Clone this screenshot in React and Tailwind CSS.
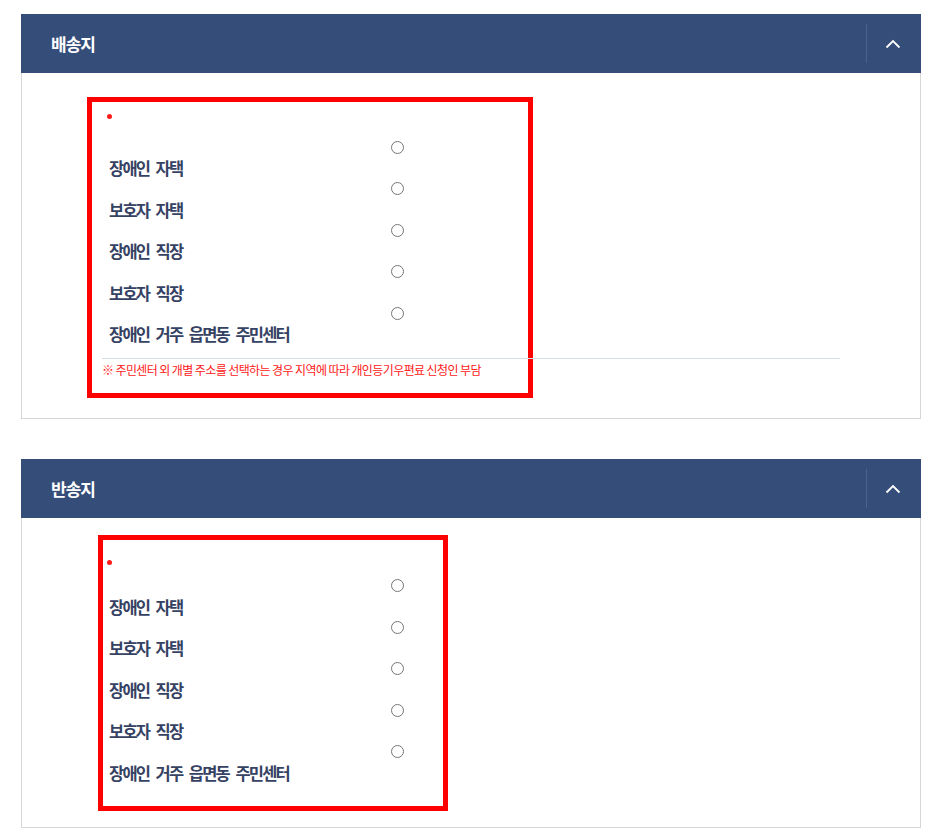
import React from "react";

const items = ["장애인 자택", "보호자 자택", "장애인 직장", "보호자 직장", "장애인 거주 읍면동 주민센터"];

function Chevron() {
  return (
    <svg width="16" height="10" viewBox="0 0 16 10" fill="none">
      <polyline points="1.5,8.5 8,2 14.5,8.5" stroke="#ffffff" strokeWidth="1.8" fill="none" />
    </svg>
  );
}

function Header({ title }) {
  return (
    <div className="h-[59px] bg-[#344d79] flex items-center justify-between">
      <div className="pl-[30px] text-white text-[17px] font-bold tracking-[-1px] leading-none">
        {title}
      </div>
      <div className="w-[55px] h-[39px] border-l border-[#4b6290] flex items-center justify-center pr-[3px]">
        <Chevron />
      </div>
    </div>
  );
}

function Options({ name, radioMl, labelMl }) {
  return (
    <div>
      {items.map((t) => (
        <div key={t} className="h-[41.5px]">
          <input type="radio" name={name} className={"block m-0 w-[13px] h-[13px] " + radioMl} />
          <div
            className={"mt-[2.5px] h-[26px] leading-[24px] text-[16.5px] font-bold text-[#364263] tracking-[-1.8px] [word-spacing:4.5px] whitespace-nowrap " + labelMl}
          >
            {t}
          </div>
        </div>
      ))}
    </div>
  );
}

export default function App() {
  return (
    <div
      className="w-[935px] min-h-[840px] bg-white pt-[14px] pl-[21px]"
      style={{ fontFamily: '"Noto Sans CJK KR", "Noto Sans", sans-serif' }}
    >
      <div className="w-[900px]">
        <Header title="배송지" />
        <div className="border-x border-b border-[#d6d6d6] pt-[24px] pb-[20px] pl-[65px]">
          <div className="w-[446px] border-[5px] border-[#ff0000] pb-[14px]">
            <div className="mt-[12px] ml-[15px] w-[5px] h-[5px] rounded-full bg-[#ff1a1a]" />
            <div className="mt-[21.5px]">
              <Options name="ship" radioMl="ml-[298.5px]" labelMl="ml-[17px]" />
            </div>
            <div className="mt-[10px] ml-[10px] w-[738px] h-px bg-[#d5dde9]" />
            <div className="mt-[2px] ml-[10px] text-[12px] leading-[18px] text-[#ff2020] tracking-[-0.6px] whitespace-nowrap">
              ※ 주민센터 외 개별 주소를 선택하는 경우 지역에 따라 개인등기우편료 신청인 부담
            </div>
          </div>
        </div>
      </div>

      <div className="w-[900px] mt-[40px]">
        <Header title="반송지" />
        <div className="border-x border-b border-[#d6d6d6] pt-[17px] pb-[16px] pl-[76px]">
          <div className="w-[350px] border-[5px] border-[#ff0000] pb-[19.5px]">
            <div className="mt-[20px] ml-[4px] w-[5px] h-[5px] rounded-full bg-[#ff1a1a]" />
            <div className="mt-[14px]">
              <Options name="ret" radioMl="ml-[287.5px]" labelMl="ml-[6px]" />
            </div>
          </div>
        </div>
      </div>
    </div>
  );
}
